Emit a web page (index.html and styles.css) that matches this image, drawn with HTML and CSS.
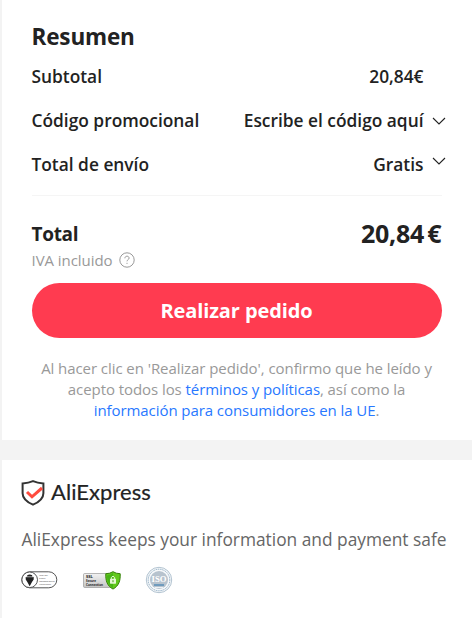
FILE: index.html
```html
<!DOCTYPE html>
<html lang="es">
<head>
<meta charset="utf-8">
<title>Resumen</title>
<link rel="stylesheet" href="styles.css">
</head>
<body>
<main class="page">
  <section class="summary">
    <h1 class="title">Resumen</h1>
    <div class="row"><span>Subtotal</span><span class="value">20,84€</span></div>
    <div class="row"><span>Código promocional</span><span class="value">Escribe el código aquí</span>
      <svg class="chevron" viewBox="0 0 14 8"><path d="M1 1l6 6 6-6"/></svg></div>
    <div class="row"><span>Total de envío</span><span class="value">Gratis</span>
      <svg class="chevron raised" viewBox="0 0 14 8"><path d="M1 1l6 6 6-6"/></svg></div>
    <div class="total"><span class="total-label">Total</span><span class="price">20,84<span class="euro">€</span></span></div>
    <div class="tax"><span>IVA incluido</span>
      <svg class="help" viewBox="0 0 16 16"><circle cx="8" cy="8" r="7.2"/><path d="M5.900 6.300c0-1.300.9-2.100 2.100-2.100s2.100.8 2.100 1.900c0 1.500-2.100 1.600-2.100 3.200M8 10.800v1.100"/></svg></div>
    <button class="submit">Realizar pedido</button>
    <p class="terms">Al hacer clic en 'Realizar pedido', confirmo que he leído y<br>acepto todos los <a>términos y políticas</a>, así como la<br><a>información para consumidores en la UE</a>.</p>
  </section>
  <section class="safety">
    <div class="brand">
      <svg class="shield" viewBox="0 0 24 26"><path class="outline" d="M12 1.200C8.800 2.600 5.400 3.200 1.600 3.400v9.800c0 5.400 4.300 8.800 10.400 11.500 6.100-2.700 10.400-6.100 10.400-11.500V3.400C18.600 3.200 15.200 2.600 12 1.200z"/><path class="check" d="M6 12l5 4.800L21 8"/></svg>
      <span class="brand-name">AliExpress</span>
    </div>
    <p class="message">AliExpress keeps your information and payment safe</p>
    <div class="badges">
      <svg width="37" height="18" viewBox="0 0 37 18">
        <rect x=".8" y=".8" width="35" height="16" rx="8" fill="#fff" stroke="#555"/>
        <circle cx="8.700" cy="8.800" r="7.800" fill="#fff" stroke="#555"/>
        <path d="M6.200 4.200q2.500-1.600 5 0v1.900h1.500v2.400L11 11l-2.300 4.200L6.300 11 4.700 8.500V6.100h1.500z" fill="#222"/><path d="M5 5.800h7.500" stroke="#ccc" stroke-width=".8"/>
        <g font-family="Open Sans, sans-serif" font-size="2" fill="#555"><text x="18" y="5.300" textLength="9" lengthAdjust="spacingAndGlyphs">ISO/IEC</text><text x="18" y="8.100" textLength="7" lengthAdjust="spacingAndGlyphs">27001</text><text x="18" y="10.900" textLength="16">Information Security</text><text x="18" y="13.700" textLength="12">Management</text></g>
      </svg>
      <svg class="ssl" width="38" height="19" viewBox="0 0 38 19">
        <defs><linearGradient id="metal" x2="0" y2="1"><stop stop-color="#f2f2f2"/><stop offset="1" stop-color="#c4c4c4"/></linearGradient></defs>
        <rect x=".5" y="2.500" width="31" height="14" rx="1.200" fill="url(#metal)" stroke="#999" stroke-width=".7"/>
        <g font-family="Open Sans, sans-serif" font-weight="700" font-size="2.700" fill="#222"><text x="3" y="7" textLength="7" lengthAdjust="spacingAndGlyphs">SSL</text><text x="3" y="10.800" textLength="10" lengthAdjust="spacingAndGlyphs">Secure</text><text x="3" y="14.600" textLength="17" lengthAdjust="spacingAndGlyphs">Connection</text></g>
        <path d="M30 .7q3 2 7.200 2c.3 7-1.200 12-7.200 15.400-6-3.400-7.500-8.400-7.200-15.400q4.200 0 7.200-2z" fill="#62c91c" stroke="#36800b"/>
        <path d="M30 2v15c-4.600-3-6-7-6-12.500q3-.5 6-2.500z" fill="#279b10" opacity=".45"/>
        <rect x="27" y="7.700" width="6" height="5" rx=".6" fill="#e5f8d4"/><path d="M28.300 8V6.500q1.700-2.700 3.400 0V8" fill="none" stroke="#e5f8d4"/><path d="M30 9.200v2" stroke="#459d18"/>
      </svg>
      <svg class="iso" width="28" height="28" viewBox="0 0 28 28">
        <circle cx="14" cy="14" r="12.700" fill="#f7f9fb" stroke="#a9bccb" stroke-width=".9"/>
        <circle cx="14" cy="14" r="10.800" fill="none" stroke="#8dacc3" stroke-width="1" stroke-dasharray="1.200 .7"/>
        <circle cx="14" cy="14" r="9" fill="#b7c3ce"/>
        <text x="6.500" y="16" textLength="15" lengthAdjust="spacingAndGlyphs" font-family="Liberation Serif, serif" font-weight="700" font-size="8" fill="#fff">ISO</text>
        <path d="M9 19h10" stroke="#6f9bbd" stroke-width="2"/><path d="M10 21.500h8" stroke="#edf2f6"/>
      </svg>
    </div>
  </section>
</main>
</body>
</html>
```
FILE: styles.css
```css
* { box-sizing: border-box; }
body { margin: 0; background: #fff; font-family: "Open Sans", sans-serif; color: #222; }
.page { width: 472px; height: 618px; padding-left: 2px; background: #f3f3f3; }
.summary { height: 440px; padding: 21px 30.500px 0 29.500px; background: #fff; }
.title { margin: 0; height: 32.500px; font-size: 22.500px; letter-spacing: -.15px; line-height: 31px; font-weight: 700; }
.row { display: flex; align-items: center; height: 44px; padding-right: 18px; font-size: 17.330px; font-weight: 600; white-space: nowrap; }
.value { margin-left: auto; }
.chevron { width: 14px; height: 8px; margin: 2px -22.500px 0 8.500px; fill: none; stroke: #222; stroke-width: 1.100; }
.raised { margin-top: -6px; }
.total { display: flex; justify-content: space-between; height: 54px; margin-top: 9.500px; padding-top: 20px; border-top: 1px solid #f5f5f5; font-weight: 700; line-height: 35px; }
.total-label { font-size: 19px; letter-spacing: -.3px; line-height: 37px; }
.price { font-size: 25px; letter-spacing: -.2px; }
.euro { margin-left: 3px; letter-spacing: 0; }
.tax { display: flex; align-items: center; height: 22px; gap: 6px; font-size: 15px; letter-spacing: -.05px; color: #999; }
.help { width: 16px; height: 16px; fill: none; stroke: #999; stroke-width: 1; }
.submit { display: block; width: 410px; height: 54.500px; margin: 12px 0 0; padding: 0; border: 0; border-radius: 28px; background: #ff3b50; color: #fff; font: 700 20px/56px "Open Sans", sans-serif; letter-spacing: -.1px; }
.terms { margin: 20px -9px 0; text-align: center; font-size: 15px; letter-spacing: -.07px; line-height: 21px; color: #999; white-space: nowrap; }
.terms a { color: #2878ff; }
.safety { height: 158px; margin-top: 20px; padding: 19px 0 0 19px; background: #fff; }
.brand { display: flex; align-items: center; height: 27px; gap: 6px; }
.shield { width: 24px; height: 26px; fill: none; }
.outline { stroke: #333; stroke-width: 2; }
.check { stroke: #ff4b3e; stroke-width: 3; }
.brand-name { margin-top: -2px; font: 400 22px/26px Lato, sans-serif; letter-spacing: .05px; color: #222; -webkit-text-stroke: .2px #222; }
.message { margin: 21px 0 0 .5px; font-size: 17.330px; line-height: 24px; color: #666; white-space: nowrap; }
.badges { display: flex; align-items: center; height: 28px; margin-top: 15px; }
.ssl { margin-left: 25px; }
.iso { margin-left: 24px; }
```
